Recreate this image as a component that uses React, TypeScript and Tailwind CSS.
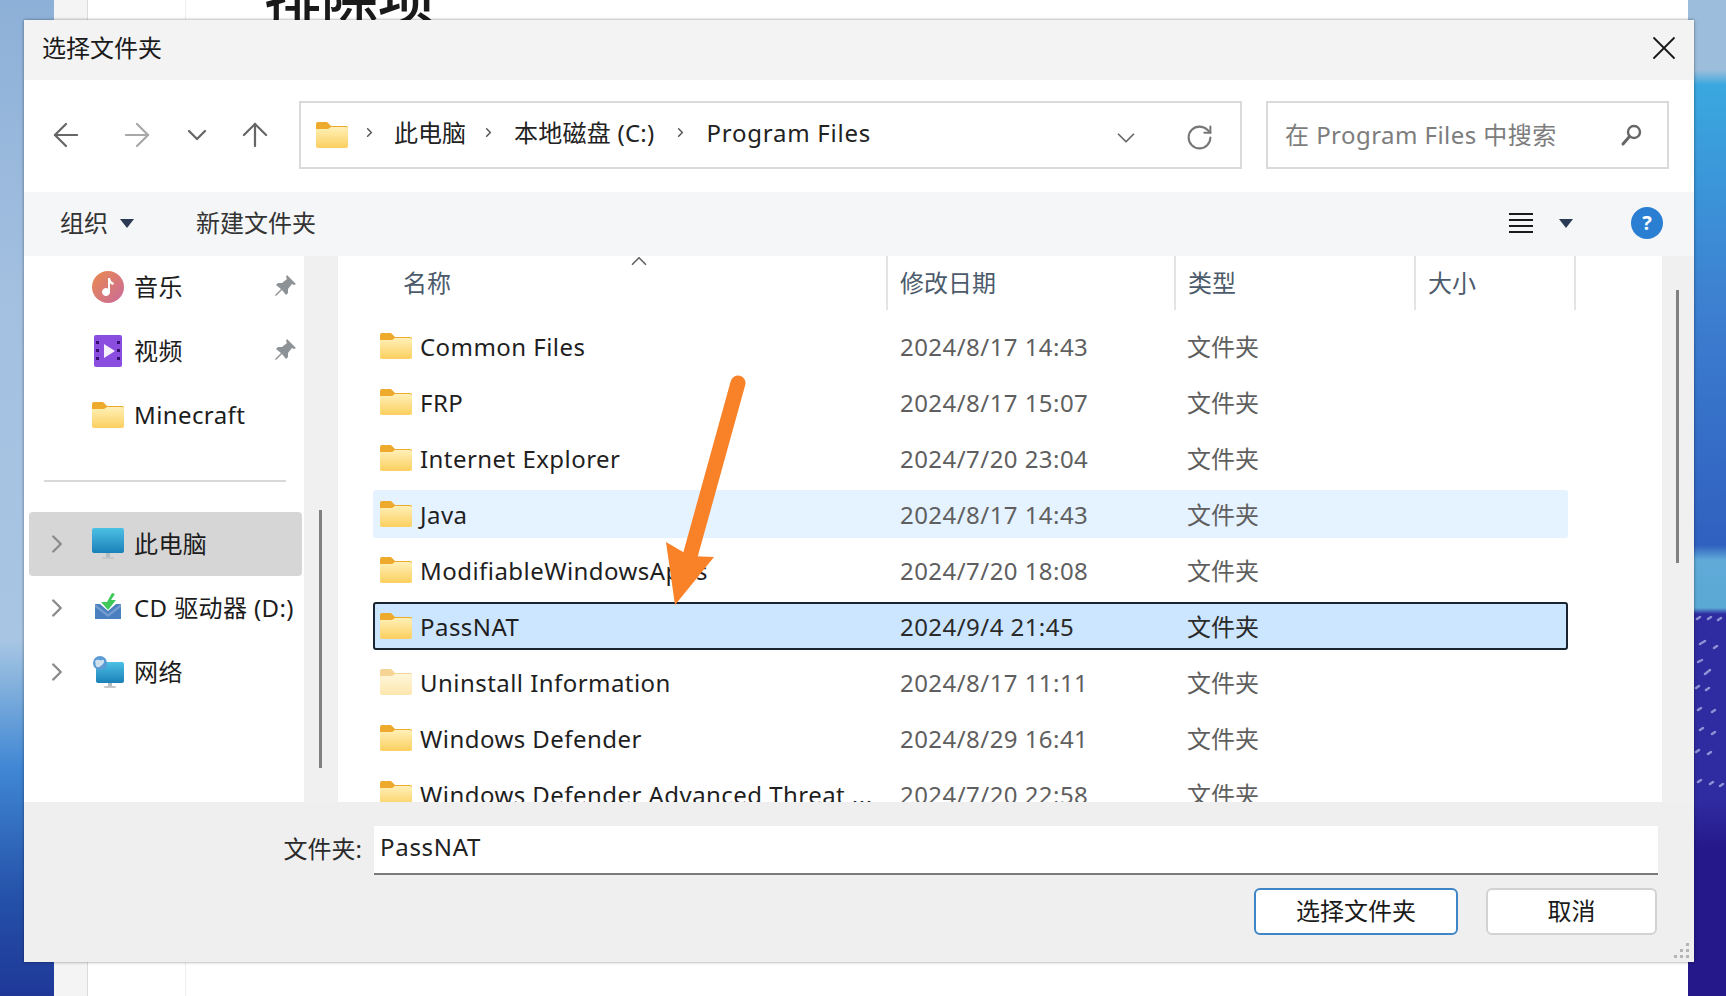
import { ChevronDown, ChevronRight, ChevronUp, ArrowLeft, ArrowRight, ArrowUp, RotateCw, X } from "lucide-react";

const font = "font-['Noto_Sans','Noto_Sans_CJK_SC',sans-serif]";

const files = [
  { name: "Common Files", date: "2024/8/17 14:43" },
  { name: "FRP", date: "2024/8/17 15:07" },
  { name: "Internet Explorer", date: "2024/7/20 23:04" },
  { name: "Java", date: "2024/8/17 14:43", hover: true },
  { name: "ModifiableWindowsApps", date: "2024/7/20 18:08" },
  { name: "PassNAT", date: "2024/9/4 21:45", selected: true },
  { name: "Uninstall Information", date: "2024/8/17 11:11", faded: true },
  { name: "Windows Defender", date: "2024/8/29 16:41" },
  { name: "Windows Defender Advanced Threat ...", date: "2024/7/20 22:58" },
];

function Folder({ faded = false }: { faded?: boolean }) {
  return (
    <svg width="32" height="26" viewBox="0 0 32 26" className={faded ? "shrink-0 opacity-50" : "shrink-0"}>
      <path d="M2 0h9l4 4h15a2 2 0 0 1 2 2v6H0V2a2 2 0 0 1 2-2z" fill="#eeaa2c" />
      <path d="M0 7h12l3-2h15a2 2 0 0 1 2 2v17a2 2 0 0 1-2 2H2a2 2 0 0 1-2-2z" fill="url(#folderFill)" />
    </svg>
  );
}

function Pin() {
  return (
    <svg width="24" height="24" viewBox="0 0 24 24" className="mb-[2px] mr-[5px] shrink-0">
      <path d="M14 1l9 9-2 1-2-1-4 5 0 4-2 2-4-5-6 6-1-1 6-6-5-4 2-2h4l5-4-1-2z" fill="#8d9296" />
    </svg>
  );
}

function Music() {
  return (
    <svg width="32" height="32" viewBox="0 0 32 32" className="shrink-0">
      <circle cx="16" cy="16" r="16" fill="url(#musicFill)" />
      <path d="M16 7h2c.5 3 2 4 4 5l-1 2c-1.500-.5-2.500-1-3-2v9a4 4 0 1 1-2-3.400z" fill="#fff" />
    </svg>
  );
}

function Video() {
  return (
    <svg width="28" height="32" viewBox="0 0 28 32" className="ml-[2px] shrink-0">
      <rect width="28" height="32" rx="2" fill="#8b4de0" />
      <path d="M10 9l11 7-11 7z" fill="#f4eeff" />
      <g fill="#34106e">
        <rect x="2" y="6" width="3" height="3" />
        <rect x="2" y="14" width="3" height="3" />
        <rect x="2" y="22" width="3" height="3" />
        <rect x="23" y="6" width="3" height="3" />
        <rect x="23" y="14" width="3" height="3" />
        <rect x="23" y="22" width="3" height="3" />
      </g>
    </svg>
  );
}

function Computer() {
  return (
    <svg width="32" height="32" viewBox="0 0 32 32" className="shrink-0">
      <rect x="0" y="0" width="32" height="25" rx="2" fill="url(#screenFill)" />
      <rect x="14" y="25" width="4" height="4" fill="#b4bcc0" />
      <rect x="10" y="29" width="12" height="2" rx="1" fill="#c4c8ca" />
    </svg>
  );
}

function CdDrive() {
  return (
    <svg width="26" height="27" viewBox="0 0 26 27" className="mb-[4px] ml-[3px] shrink-0">
      <path d="M0 11h5l8 7 8-7h5v15H0z" fill="#4a7fc0" />
      <path d="M0 11l13 10 13-10v3L13 24 0 14z" fill="#8fb0d8" opacity="0.6" />
      <path d="M17 0l3 1-4 6h5l-8 10-7-8h6z" fill="#3ec95a" />
    </svg>
  );
}

function Network() {
  return (
    <svg width="32" height="32" viewBox="0 0 32 32" className="shrink-0">
      <rect x="4" y="6" width="28" height="21" rx="2" fill="url(#screenFill)" />
      <rect x="16" y="27" width="4" height="3" fill="#b4bcc0" />
      <rect x="12" y="30" width="12" height="2" rx="1" fill="#c4c8ca" />
      <circle cx="8" cy="7" r="7" fill="#5b9bd5" />
      <path d="M3 5c3-3 5 0 7-1s3 2 1 4-4 4-6 3-1-3-2-6z" fill="#cfe0ee" />
    </svg>
  );
}

function Caret({ className = "" }: { className?: string }) {
  return (
    <svg width="14" height="9" viewBox="0 0 14 9" className={className}>
      <path d="M0 0h14L7 9z" fill="#2b3a55" />
    </svg>
  );
}

function SearchGlass() {
  return (
    <svg width="24" height="24" viewBox="0 0 24 24" fill="none" stroke="#666" className="shrink-0">
      <circle cx="15" cy="9" r="6" strokeWidth="2.4" />
      <path d="M10.500 13.500L4 21" strokeWidth="3" strokeLinecap="round" />
    </svg>
  );
}

function SideRow({ icon, label, pin, expand, active }: { icon: React.ReactNode; label: string; pin?: boolean; expand?: boolean; active?: boolean }) {
  return (
    <div className={`ml-[5px] flex h-16 w-[273px] items-center rounded ${active ? "bg-[#d6d6d6]" : ""}`}>
      <div className="flex w-[56px] shrink-0 justify-center">
        {expand && <ChevronRight size={30} strokeWidth={1.9} className="text-[#8a8a8a]" />}
      </div>
      <div className="ml-[7px] flex w-[42px] shrink-0 items-center">{icon}</div>
      <span className="mb-px flex-1 whitespace-nowrap text-[24px] tracking-[0.4px] text-[#1c1c1c]">{label}</span>
      {pin && <Pin />}
    </div>
  );
}

function Crumb() {
  return <ChevronRight size={15} strokeWidth={2.4} className="shrink-0 text-[#555]" />;
}

function FileRow({ file }: { file: (typeof files)[number] }) {
  const state = file.selected
    ? "border-2 border-[#1a2430] bg-[#cce6ff] grid-cols-[525px_287px_1fr]"
    : file.hover
      ? "bg-[#e5f2ff] grid-cols-[527px_287px_1fr]"
      : "grid-cols-[527px_287px_1fr]";
  const muted = file.selected ? "text-[#2a2a2a]" : "text-[#5f5f5f]";
  return (
    <div className={`box-border grid h-12 w-[1195px] shrink-0 items-center rounded-[3px] ${state}`}>
      <div className={`flex items-center gap-2 ${file.selected ? "pl-[5px]" : "pl-[7px]"}`}>
        <Folder faded={file.faded} />
        <span className="mt-[2px] whitespace-nowrap text-[24px] tracking-[0.45px] text-[#1f1f1f]">{file.name}</span>
      </div>
      <span className={`mt-[2px] whitespace-nowrap text-[24px] tracking-[0.45px] ${muted}`}>{file.date}</span>
      <span className={`mt-[2px] whitespace-nowrap text-[24px] ${muted}`}>文件夹</span>
    </div>
  );
}

export default function App() {
  return (
    <div className={`relative flex h-[996px] w-[1726px] overflow-hidden bg-white ${font}`}>
      <svg width="0" height="0" className="absolute">
        <defs>
          <linearGradient id="folderFill" x1="0" y1="0" x2="0" y2="1">
            <stop offset="0" stopColor="#fff0b8" />
            <stop offset="1" stopColor="#fbcf5e" />
          </linearGradient>
          <linearGradient id="musicFill" x1="0" y1="0" x2="1" y2="1">
            <stop offset="0" stopColor="#ea8a4e" />
            <stop offset="1" stopColor="#c96a9c" />
          </linearGradient>
          <linearGradient id="screenFill" x1="0" y1="0" x2="0" y2="1">
            <stop offset="0" stopColor="#4cc0e4" />
            <stop offset="1" stopColor="#1a80b8" />
          </linearGradient>
        </defs>
      </svg>

      {/* desktop and the window behind the dialog */}
      <div className="h-full w-[54px] shrink-0 bg-[linear-gradient(180deg,#8db0d8_0px,#a3c0e0_300px,#a8c6e4_640px,#6ea4da_710px,#3f86d4_770px,#2450a8_900px,#1f3898_996px)]" />
      <div className="flex h-full w-[34px] shrink-0 border-r border-[#dcdcdc] bg-[#f4f4f4]" />
      <div className="h-full w-[98px] shrink-0 border-r border-[#eeeeee]" />
      <div className="relative flex-1">
        <span className="absolute left-[78px] top-[-37px] whitespace-nowrap text-[57px] font-medium leading-[70px] text-[#1a1a1a]">排除项</span>
      </div>
      <div className="relative h-full w-[38px] shrink-0 bg-[linear-gradient(180deg,#9cbddb_0px,#9cbddb_70px,#3aa8e0_85px,#3d80d0_300px,#3060c0_545px,#60aad8_560px,#5aa8d4_608px,#2f2ba0_614px,#2f2ba0_800px,#24188a_850px,#24188a_996px)]">
        <svg width="38" height="200" viewBox="0 0 38 200" className="absolute left-0 top-[612px]">
          <path
            d="M9 7l3-2M20 7l3-2M30 8l3-2M12 32l5-3M26 36l3-2M10 50l4-2M17 62l5-4M8 76l3-2M18 78l3-2M10 98l3-2M24 100l3-2M12 118l3-2M24 122l3-2M8 140l3-2M20 142l3-2M10 170l3-2M22 172l3-2M32 174l3-2"
            stroke="#c4c6f0"
            strokeWidth="2.5"
            strokeLinecap="round"
            opacity="0.65"
          />
        </svg>
      </div>

      {/* dialog */}
      <div className="absolute left-6 top-5 flex h-[942px] w-[1670px] flex-col overflow-hidden bg-white shadow-[0_0_3px_rgba(0,0,0,0.45)]">
        <div className="flex h-[60px] shrink-0 items-center justify-between bg-[#f3f3f3] pb-1 pl-[18px] pr-[10px]">
          <span className="text-[24px] text-[#1a1a1a]">选择文件夹</span>
          <X size={40} strokeWidth={1.1} className="text-[#1a1a1a]" />
        </div>

        <div className="flex h-[112px] shrink-0 items-center bg-white pb-[2px]">
          <div className="flex w-[275px] shrink-0 items-center pl-[6px]">
            <div className="flex w-[72px] justify-center"><ArrowLeft size={38} strokeWidth={1.4} className="text-[#666]" /></div>
            <div className="flex w-[70px] justify-center"><ArrowRight size={38} strokeWidth={1.4} className="text-[#a8a8a8]" /></div>
            <div className="flex w-[50px] justify-center"><ChevronDown size={32} strokeWidth={1.7} className="text-[#666]" /></div>
            <div className="flex w-[66px] justify-center"><ArrowUp size={38} strokeWidth={1.4} className="text-[#666]" /></div>
          </div>
          <div className="flex h-[68px] w-[943px] shrink-0 items-center border-2 border-[#dadada] pl-[15px] text-[24px] text-[#222]">
            <Folder />
            <div className="mb-[5px] ml-[14px] flex items-center">
              <Crumb />
              <span className="ml-[17px]">此电脑</span>
              <div className="ml-[15px]"><Crumb /></div>
              <span className="ml-[18px] tracking-[0.25px]">本地磁盘 (C:)</span>
              <div className="ml-[18px]"><Crumb /></div>
              <span className="ml-[19px] tracking-[0.75px]">Program Files</span>
            </div>
            <ChevronDown size={30} strokeWidth={1.4} className="ml-auto mt-[6px] text-[#666]" />
            <RotateCw size={29} strokeWidth={1.7} className="ml-[44px] mr-[26px] mt-[4px] text-[#777]" />
          </div>
          <div className="ml-6 flex h-[68px] w-[403px] shrink-0 items-center justify-between border-2 border-[#dadada] pl-[17px] pr-[24px] text-[24px] text-[#7d7d7d]">
            <span className="mb-px whitespace-nowrap tracking-[0.45px]">在 Program Files 中搜索</span>
            <SearchGlass />
          </div>
        </div>

        <div className="flex h-16 shrink-0 items-center bg-[#f5f6f7] pb-[2px] pl-9 text-[24px] text-[#333]">
          <span>组织</span>
          <Caret className="ml-[12px]" />
          <span className="ml-[62px]">新建文件夹</span>
          <div className="ml-auto flex flex-col gap-[4px]">
            <div className="h-[2px] w-[24px] bg-[#1a1a1a]" />
            <div className="h-[2px] w-[24px] bg-[#1a1a1a]" />
            <div className="h-[2px] w-[24px] bg-[#1a1a1a]" />
            <div className="h-[2px] w-[24px] bg-[#1a1a1a]" />
          </div>
          <Caret className="ml-[26px]" />
          <div className="ml-[58px] mr-[31px] flex h-8 w-8 items-center justify-center rounded-full bg-[#2a7fd2] text-[20px] font-bold text-white">?</div>
        </div>

        <div className="flex min-h-0 flex-1">
          <div className="flex w-[280px] shrink-0 flex-col bg-white">
            <div className="-mt-px">
              <SideRow icon={<Music />} label="音乐" pin />
              <SideRow icon={<Video />} label="视频" pin />
              <SideRow icon={<Folder />} label="Minecraft" />
            </div>
            <div className="ml-5 mt-[33px] h-[2px] w-[242px] bg-[#d8d8d8]" />
            <div className="mt-[30px]">
              <SideRow icon={<Computer />} label="此电脑" expand active />
              <SideRow icon={<CdDrive />} label="CD 驱动器 (D:)" expand />
              <SideRow icon={<Network />} label="网络" expand />
            </div>
          </div>

          <div className="flex w-[34px] shrink-0 justify-center bg-[#f0f0f0] pr-[2px] pt-[254px]">
            <div className="h-[258px] w-[3px] bg-[#808080]" />
          </div>

          <div className="relative flex w-[1324px] shrink-0 flex-col overflow-hidden bg-white">
            <div className="grid h-[54px] shrink-0 grid-cols-[550px_288px_240px_160px] text-[24px] text-[#4c5b6b]">
              <div className="flex items-center border-r-2 border-[#e4e4e4] pl-[65px]">名称</div>
              <div className="flex items-center border-r-2 border-[#e4e4e4] pl-[12px]">修改日期</div>
              <div className="flex items-center border-r-2 border-[#e4e4e4] pl-3">类型</div>
              <div className="flex items-center border-r-2 border-[#e4e4e4] pl-3">大小</div>
            </div>
            <ChevronUp size={26} strokeWidth={1.6} className="absolute left-[288px] top-[-8px] text-[#666]" />
            <div className="flex flex-col gap-2 pl-[35px] pt-3">
              {files.map((file) => (
                <FileRow key={file.name} file={file} />
              ))}
            </div>
          </div>

          <div className="flex flex-1 justify-center bg-[#f0f0f0] pr-[2px] pt-[34px]">
            <div className="h-[273px] w-[3px] bg-[#808080]" />
          </div>
        </div>

        <div className="relative flex h-[160px] shrink-0 flex-col bg-[#efefef]">
          <div className="mt-6 flex items-center">
            <span className="mb-1 ml-[248px] mr-[12px] w-[90px] text-right text-[24px] text-[#2a2a2a]">文件夹:</span>
            <div className="h-[49px] w-[1284px] border-b-2 border-[#7a7a7a] bg-white pl-[6px] text-[24px] leading-[42px] tracking-[0.7px] text-[#222]">
              PassNAT
            </div>
          </div>
          <div className="mt-[13px] flex justify-end gap-[28px] pr-[37px]">
            <div className="flex h-[47px] w-[204px] items-center justify-center rounded-md border-2 border-[#3d85c6] bg-white pb-[2px] text-[24px] text-[#1a1a1a]">选择文件夹</div>
            <div className="flex h-[47px] w-[171px] items-center justify-center rounded-md border-2 border-[#d2d2d2] bg-white pb-[2px] text-[24px] text-[#1a1a1a]">取消</div>
          </div>
          <svg width="16" height="16" viewBox="0 0 16 16" className="absolute bottom-[3px] right-[4px]">
            <g fill="#b4b4b4">
              <rect x="12" y="0" width="3" height="3" />
              <rect x="6" y="6" width="3" height="3" />
              <rect x="12" y="6" width="3" height="3" />
              <rect x="0" y="12" width="3" height="3" />
              <rect x="6" y="12" width="3" height="3" />
              <rect x="12" y="12" width="3" height="3" />
            </g>
          </svg>
        </div>
      </div>

      {/* annotation arrow over the dialog */}
      <svg width="1726" height="996" viewBox="0 0 1726 996" className="pointer-events-none absolute left-0 top-0">
        <path d="M738 383L689 560" stroke="#f98128" strokeWidth="15" strokeLinecap="round" fill="none" />
        <path d="M666 542L690 556L714 557L675 605Z" fill="#f98128" />
      </svg>
    </div>
  );
}
